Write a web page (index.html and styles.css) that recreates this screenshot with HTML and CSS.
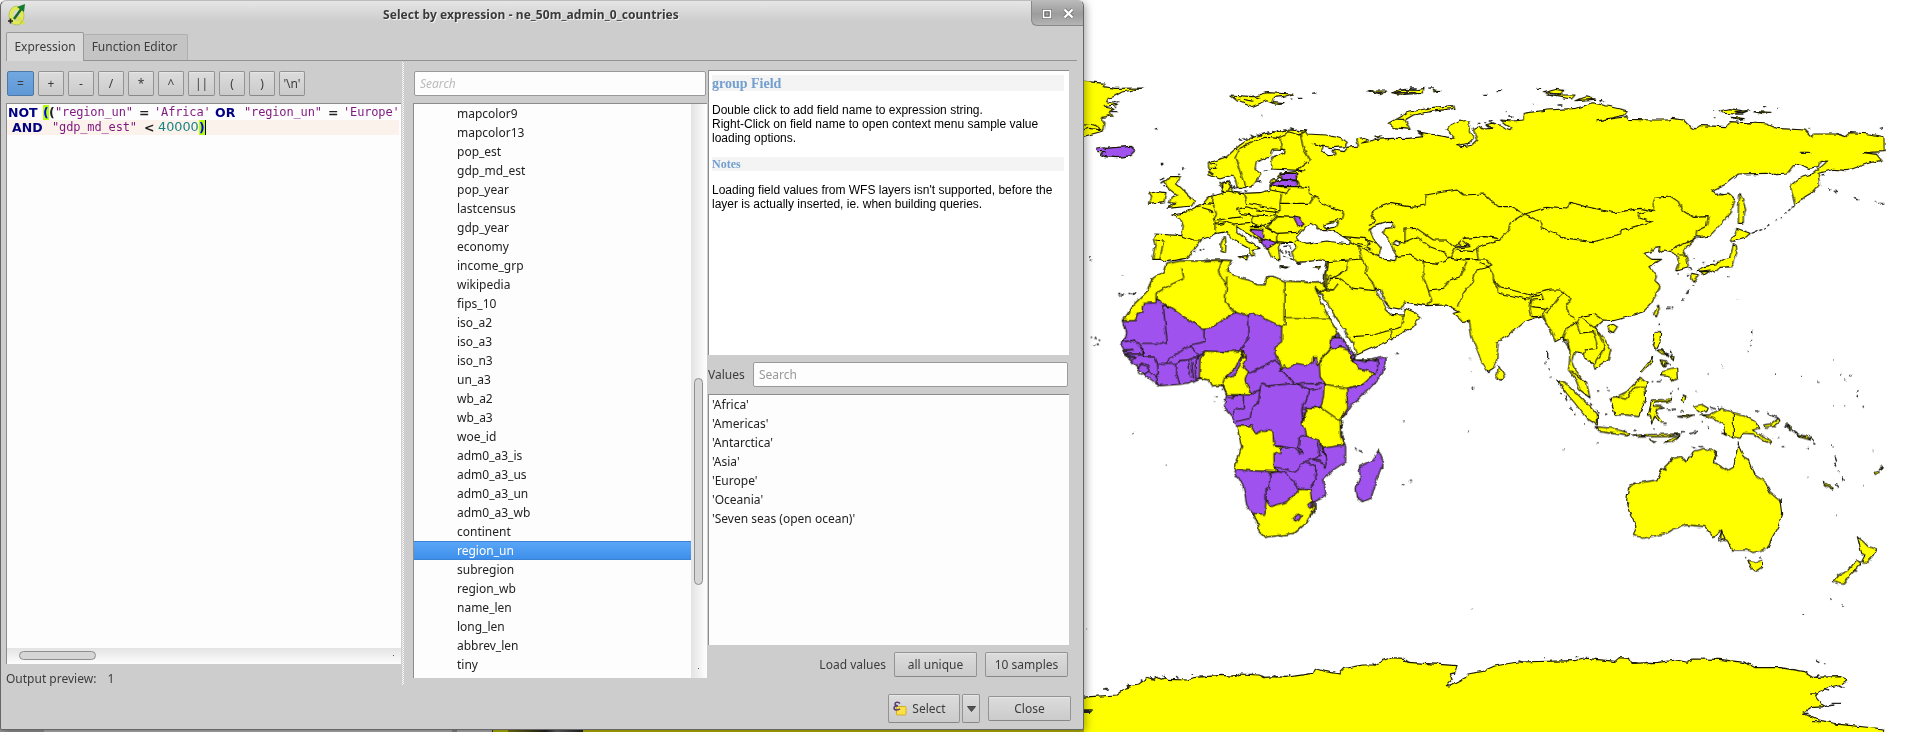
FILE: index.html
```html
<!DOCTYPE html>
<html lang="en">
<head>
<meta charset="utf-8">
<title>Select by expression</title>
<link rel="stylesheet" href="styles.css">
</head>
<body>
<div class="desktop">
<svg class="map" viewBox="0 0 2517 2196" width="839" height="732">
<defs><filter id="coast" filterUnits="userSpaceOnUse" x="0" y="0" width="2517" height="2196"><feTurbulence type="fractalNoise" baseFrequency=".05" numOctaves="2" seed="4"/><feDisplacementMap in="SourceGraphic" scale="13" xChannelSelector="R" yChannelSelector="G"/></filter></defs>
<g filter="url(#coast)"><g transform="translate(0 180)">
<!-- Eurasia -->
<path class="y" d="M680,213 L680,222 740,225 790,238 803,248 795,260 760,263 725,258 695,250 730,262 725,275 745,287 765,285 758,270 790,275 800,262 835,258 830,237 845,233 865,240 845,250 870,245 885,238 935,235 985,235 1030,230 1010,215 1050,222 1125,235 1110,220 1098,210 1110,195 1140,180 1165,185 1170,200 1168,215 1180,235 1165,250 1130,257 1150,260 1175,255 1190,240 1185,225 1180,205 1195,198 1210,207 1240,205 1215,195 1235,190 1262,195 1270,205 1290,212 1295,205 1280,195 1262,180 1300,183 1330,180 1330,160 1400,150 1490,145 1540,128 1580,138 1642,152 1635,165 1550,183 1640,170 1645,178 1720,180 1765,180 1775,175 1810,180 1825,195 1845,207 1860,197 1940,200 1950,185 2060,192 2090,205 2175,210 2195,230 2200,222 2275,222 2295,230 2310,218 2370,222 2412,230 2413,275 2350,278 2390,283 2405,302 2370,308 2300,332 2260,328 2235,335 2215,340 2218,375 2200,395 2175,410 2145,437 2130,375 2150,358 2200,340 2235,310 2240,303 2220,305 2215,320 2185,325 2160,312 2140,317 2120,342 2080,345 2060,340 1975,342 1940,370 1895,392 1920,405 1945,402 1965,420 1952,460 1920,495 1890,527 1865,532 1850,530 1835,545 1820,560 1810,575 1820,590 1825,620 1790,630 1798,610 1790,590 1775,575 1750,570 1735,578 1740,560 1725,562 1715,575 1690,580 1715,598 1745,598 1710,620 1730,645 1725,665 1740,680 1715,730 1690,755 1640,772 1600,782 1572,780 1555,795 1545,805 1575,840 1593,870 1585,900 1545,928 1540,910 1515,895 1510,880 1485,875 1480,885 1475,905 1485,930 1500,950 1520,970 1530,1014 1500,990 1485,955 1465,930 1468,910 1470,870 1460,840 1445,835 1425,845 1415,815 1395,785 1385,765 1335,785 1300,815 1255,845 1250,900 1240,925 1222,935 1200,895 1175,830 1168,780 1150,788 1120,760 1140,755 1100,735 1040,737 985,728 975,725 960,750 930,745 915,725 900,690 885,685 905,720 920,750 935,763 970,765 975,745 1000,755 1020,770 1000,800 935,838 830,885 820,850 790,805 760,760 735,720 720,700 730,680 742,605 720,600 680,605 650,607 640,590 635,575 650,558 640,550 600,550 595,560 600,600 575,590 560,560 545,545 500,520 470,500 470,515 500,540 540,565 520,568 520,590 510,585 505,565 460,540 440,515 410,520 390,530 365,538 350,560 330,580 320,595 260,605 240,598 218,598 225,560 220,535 225,522 305,527 310,495 300,475 275,465 310,460 350,440 370,430 385,412 410,405 428,400 420,370 445,362 450,380 460,398 485,400 540,398 570,390 570,372 580,355 595,365 605,355 590,350 600,340 670,332 575,327 575,295 595,287 615,275 610,268 580,267 570,290 530,305 525,325 545,340 520,375 475,387 470,365 455,345 420,357 387,345 385,310 440,290 480,255 510,235 560,220 620,210Z"/>
<!-- inland seas -->
<path class="w" d="M680,497 L650,530 655,545 680,553 740,543 805,552 808,540 790,530 765,515 735,508 770,500 775,485 730,495 740,508 715,510 710,500 695,490Z M870,510 L880,500 920,487 940,488 940,503 915,505 910,520 925,535 940,570 950,590 945,602 915,598 895,590 903,565 880,535Z M940,545l10,-4 8,8 -8,8 -10,-4Z"/>
<!-- Eurasian borders -->
<path class="b" d="M497,385 L465,290 480,265 520,245 555,232 600,235 605,268 M660,220 L672,270 690,300 670,315 650,332 M600,235 L625,215 660,225 680,213 M650,340 L650,358 660,380 600,378 M570,390 L620,400 630,385 M660,380 L685,383 690,405 703,410 690,430 600,430 605,400 M490,400 L500,430 600,450 600,430 M703,410 L720,425 750,440 790,455 785,475 750,487 M585,468 L600,450 M400,400 L398,430 410,460 400,478 M470,448 L500,440 530,450 590,457 585,468 520,465 480,460Z M350,438 L390,450 M370,430 L398,433 M400,478 L420,480 445,475 490,470 M405,515 L405,490 440,485 460,495 510,490 520,465 M510,490 L540,500 580,480 590,470 M580,480 L560,500 590,520 650,517 665,505 M590,470 L645,472 M590,520 L590,545 640,550 M510,500 L545,500 M550,500 L590,520 M590,545 L565,555 M305,527 L340,540 365,540 M225,540 L250,543 240,598 M790,530 L850,535 870,550 855,555 835,550 M808,545 L835,555 845,595 M835,555 L860,570 895,590 M850,535 L888,550 M742,605 L845,597 860,620 855,640 880,670 885,690 M805,600 L800,630 755,655 735,690 M775,655 L820,685 885,692 M755,655 L775,655 M870,465 L890,445 930,430 1000,442 1035,435 1035,405 1130,390 1150,405 1212,402 1255,440 1290,440 1335,462 1400,442 1460,447 1470,427 1520,440 1605,458 1680,445 1720,452 1720,430 1725,412 1770,408 1795,425 1808,452 1840,472 1885,470 1880,495 1850,510 1848,530 M870,465 L890,485 865,495 M975,550 L975,507 1010,505 1060,540 1100,540 1125,560 1150,535 1215,530 1255,535 M1255,545 L1285,510 1290,490 1335,462 1380,485 1385,505 1430,520 1445,533 1540,545 1620,525 1625,510 1715,485 1680,475 1675,462 1705,452 M975,550 L950,545 M945,590 L990,585 1030,605 1070,610 1110,595 1090,575 1050,560 1010,530 975,545 M1110,595 L1125,565 1170,560 1150,545 M1130,570 L1180,575 1195,560 1255,540 M1110,595 L1150,600 1195,595 1190,570 M1030,605 L1030,650 1045,690 1090,685 1110,660 1140,650 1160,605 M1045,690 L1055,720 1040,737 M1135,740 L1150,700 1180,660 1190,630 1215,625 1235,615 1220,600 1190,600 M1200,610 L1225,620 1240,645 1240,660 1260,680 1350,705 1410,690 1440,690 1470,715 1460,735 1460,750 1485,778 M1240,665 L1255,685 1255,700 1345,718 1350,705 M1350,730 L1355,710 1385,705 1390,718 1355,720 1350,745 1355,770 1385,770 M1355,740 L1400,745 1390,760 1397,785 M1400,760 L1430,720 1450,700 M1450,838 L1460,805 1490,788 1500,820 1540,815 1550,850 1550,865 1515,870 1510,880 M1490,788 L1500,770 1545,762 1572,780 M1500,770 L1545,805 1570,850 1572,865 1550,898 1545,910 M1450,838 L1470,870 M1475,935 L1505,960 M1795,585 L1815,585 M1770,570 L1850,535 M820,830 L880,825 965,800 970,765 M930,812 L938,838 M735,690 L760,690 775,670 M700,685 L720,700 M400,478 L410,495 435,490 M475,400 L430,390"/>
<path class="p" d="M600,340 L648,340 650,360 610,358Z M570,375 L590,360 650,363 650,380 600,380Z M640,470 L660,475 672,490 655,500Z M512,505 L548,508 552,530 545,540 520,520Z M545,535 L565,540 590,548 575,558 560,568 550,550Z M390,450l10,5 -5,3Z"/>
<path class="w" d="M585,358l12,-6 12,6 -8,8Z"/>
<!-- North Atlantic and Arctic islands -->
<path class="y" d="M-9,62 L75,70 70,80 105,85 190,84 125,97 100,110 85,115 80,125 115,133 70,140 105,148 90,155 98,168 65,172 75,190 72,212 -9,235Z M450,105 L520,110 560,98 638,102 610,110 580,112 575,125 612,128 585,133 560,122 515,140 470,122Z M925,190 L960,170 980,158 1060,142 1118,137 1122,145 1050,155 1000,165 975,180 990,208 940,203Z M270,350 L302,350 290,372 305,385 325,405 345,422 335,438 262,445 290,430 268,428 275,410 290,405 265,385 255,365Z M232,395 L258,398 252,425 208,430 215,412 207,400Z M425,370l22,-7 5,15 -8,15 -18,2Z M428,535l8,-2 2,15 -4,4 4,5 -2,20 -12,-2 -2,-20Z M475,590l30,-3 -5,13Z M600,620l25,1 -8,4Z M700,624l22,-5 -8,9Z M1390,98 L1430,88 1455,92 1440,102Z M1400,105 L1485,105 1475,117 1430,110Z M1485,122 L1520,110 1545,118Z M1918,152 L1945,146 1985,152 1970,162 1930,160Z M2020,155l50,2 -20,4Z M1955,172l35,4 -20,4Z M1965,155l40,-3 -15,6Z M885,228l20,0 -15,5Z"/>
<path class="y" d="M860,93l60,0 -20,8Z M935,98l40,-10 30,2 30,-5 -10,15 -60,3Z M1060,90l22,2 -20,4Z M0,190l45,5 20,15 -40,-5 -25,10"/>
<path class="p" d="M47,265 L70,260 75,265 110,262 155,259 167,270 150,287 110,293 75,290 60,283 75,275 50,275Z"/>
<!-- East Asian islands -->
<path class="y" d="M1980,400 L1990,425 1997,450 1990,470 1990,490 1975,490 1975,440Z M1970,505 L2010,520 2000,530 1975,538 1955,545 1950,535 1965,525Z M1960,553 L1970,560 1970,580 1962,605 1955,620 1920,622 1905,637 1890,630 1850,635 1870,620 1905,615 1925,600 1950,590Z M1835,640l20,4 -12,23 -8,-10Z M1862,635l25,0 -15,10Z M1735,735l3,12 -9,24 -8,-8Z M1585,797l15,-4 12,8 -12,17 -14,-8Z M1255,918l14,20 4,15 -12,8 -10,-10Z"/>
<g transform="translate(1200 720)">
<path class="y" d="M230,240 L265,255 300,290 330,320 352,345 352,375 320,355 285,310 260,280Z M345,380 L400,385 450,400 445,408 360,395Z M390,292 L410,290 440,275 480,235 505,250 495,265 497,300 475,350 440,345 405,345 395,310Z M515,300 L570,298 575,292 570,305 525,305 520,318 550,320 525,330 550,365 540,368 525,345 515,372 512,350 505,345Z M525,95 L542,95 540,125 530,145 518,135Z M545,215 L590,205 592,235 580,242 570,228 545,225Z M540,180l20,3 5,12 -15,3Z M570,165l12,5 -2,12Z M530,150l20,0 10,15 -18,-6Z M483,213l35,-45 -3,17 -27,30Z M555,430l25,-18 20,-6 -25,20Z M640,318 L665,313 685,325 680,335 660,335Z M660,345 L690,345 705,335 725,325 760,338 790,345 825,365 840,385 820,390 845,408 875,425 870,432 820,402 790,400 780,415 735,405 730,375 700,355Z M848,375 L875,372 895,355 900,362 880,380 855,382Z M610,285l8,3 -6,22 -8,-10Z M590,350l50,-5 -20,8Z M725,400l15,0 -5,6Z M455,408 L480,405 600,402 560,410 470,411Z M508,420l18,6 -8,2Z M920,372l15,12 -5,5Z M945,400l35,10 12,10 -30,-8Z M1030,545l30,20 -5,3 -22,-14Z M1182,515l12,-4 4,6 -12,3Z M1195,505l15,-6 -6,8Z"/>
<path class="y" d="M445,565 L460,552 530,540 545,510 580,475 605,470 620,485 640,455 670,445 710,455 700,485 745,513 760,505 768,460 775,435 790,470 808,480 825,525 855,545 870,575 900,600 905,640 895,680 875,715 862,745 820,758 800,750 755,750 740,720 722,715 725,690 700,712 675,680 620,675 580,688 560,700 490,715 460,705 468,680 445,620 440,600Z M803,783l20,5 22,-6 0,20 -18,12 -12,-10Z M1132,710 L1150,725 1165,740 1193,747 1180,770 1160,788 1145,785 1155,765 1145,760Z M1130,780 L1143,790 1125,810 1090,850 1060,842 1075,825 1105,810Z"/>
<path class="b" d="M760,338V415 M410,290 L440,295 465,262 500,262 M775,425v10 M715,720l10,-25 10,20 -20,8"/>
<path class="dots" d="M203,150v28 M198,185v4 M207,205v6 M213,227v3 M240,280l6,4 M255,290l6,12 M268,322l8,8 M285,340l4,5 M350,330l8,10 M375,343h7 M380,263h3 M385,272h4 M348,273h10 M330,310l6,6 M430,392h10 M460,391h10 M483,408h15 M535,325h22 M560,330h14 M578,328h10 M600,335h12 M640,345h5 M577,270l-6,10 M595,262v4 M538,68v6 M560,25h12 M575,22h5 M545,150l20,15 M555,190l18,5 M570,150l8,20 M545,185l15,15 M515,245h5 M530,242h12 M603,395h12 M630,402l22,-8 M685,380v8 M690,320l15,8 M712,320l8,8 M828,333h10 M862,340l25,12 M888,350l10,8 M915,375l15,12 M935,390l20,14 M955,405l20,6 M985,405l18,20 M875,412v3 M895,413h3 M905,440h8 M983,443h4 M1000,430l6,3 M1050,433h3 M1060,440v4 M1065,470l5,15 M1060,487l8,12 M1078,515v3 M1088,528l5,15 M1065,550l10,10 M1200,510l10,-10 M1178,454h2 M1072,646h2 M980,532h2 M1050,897h4 M1085,917h3 M885,223h3 M960,230h3 M1015,247h3 M1080,225h4 M1093,240h3 M1110,227h8 M1130,272v4 M1132,288v8 M1148,318l4,4 M1060,180h2 M1060,317h3 M1090,318h3 M727,199h3 M686,222h3 M647,274h2 M815,90v12 M815,120v4 M813,135v4 M803,153h4 M248,450h3 M350,431h3 M635,443h14 M655,440h12 M700,450l12,20 M545,510l15,-5 M565,488l10,-5 M440,610l8,4 M795,770h4 M843,770v6 M1120,813h12 M1070,850l5,5 M1150,560h2 M312,372h3 M522,385v4 M550,373h10 M605,285l12,5 M665,365h4 M900,598v10 M460,550h6"/>
</g>
<path class="dots" d="M2015,520l15,-6 M2035,512l8,-4 M2050,505l6,-3 M2062,498l8,-3 M2085,485l4,-4 M2100,475l4,-3 M2115,460l4,-3 M2125,450l6,-6 M2135,442l8,-3 M2225,345l8,-2 M2248,388l8,4 M2265,393l6,3 M2325,415l12,5 M2385,427h3 M2395,430h6 M2403,427h6 M2400,205l10,-2 M2095,145h3 M2048,140h10 M1900,152h4 M1902,170h4 M1370,88h15 M1250,92h12 M1210,106h12 M1360,133h3 M1433,135h14 M1558,122h12 M1560,125h14 M1285,168h12 M1275,155h3 M1210,185h8 M1230,182h8 M1190,190h8 M2186,208h3 M1920,400l10,5 M1942,620h5 M1945,647h3 M1970,718h3 M1827,690l-8,12 M1812,715l-4,8 M1840,675v3 M1820,647l6,-5 M1790,642h4 M1832,630l-6,-6 M1870,605v5 M1843,595v2 M1900,603h4 M1955,546h12 M695,100l16,-2 M655,115h12 M632,117h4 M545,166h4 M222,207l10,-2 M240,310h10 M245,310v4 M308,330l6,-5 M295,345l4,-4 M240,360l12,-6 M245,370l10,-8 M250,380h12 M100,125h8 M115,122v6 M105,140h6 M95,155l20,0 M80,165h12 M475,240h12 M490,232l10,8 M510,225l12,6 M530,222l14,2 M545,218l10,3 M560,212l8,5 M575,210l8,6 M590,210l15,4 M610,206l12,4 M630,206l14,5 M650,210l14,3 M665,212l14,0 M460,265l12,4 M430,290l12,4 M388,310l25,5 M388,325h22 M388,335l12,8 M443,368l10,10 M450,380l15,8 M460,378l8,12 M470,385h10 M530,365l12,-3 -3,6 M555,330h8 M495,395l6,-4 M615,570l6,10 M610,560l12,-2 M625,575l8,15 M610,588l10,6 M630,595l12,6 M625,560l8,6 M600,570l6,8 M340,577h5 M356,570h8 M372,568h4 M28,590h4 M32,600h4 M126,648h3 M115,700h6 M123,705h10 M145,700h5 M155,705l12,-8 M430,600v8 M655,610h8 M1215,195l20,8 M1230,185l20,8 M460,112l20,6 M490,118l30,6 M520,108l20,6 M865,97h50 M945,98h60 M960,90h60 M970,103l30,-6 M990,84h18 M1045,84h18 M1010,215l20,8 M950,178h30 M2160,277h30 M1970,162h20 M2000,188h20 M2070,343h25 M1400,100l40,2 M2270,220l20,8 M1130,560l40,-5 M1135,550l15,8 M860,560l12,8 M645,545l12,-4"/>
<!-- Africa -->
<g transform="translate(0 660)">
<path class="p" d="M258,-48 L300,-57 360,-57 425,-60 455,-58 440,-30 460,-12 505,0 530,14 555,15 560,-10 580,-10 615,4 660,5 700,9 728,8 735,25 722,38 705,22 720,60 740,100 750,120 775,160 795,190 820,220 826,238 850,245 918,230 918,250 900,290 860,335 820,370 800,400 780,420 780,450 790,480 797,500 797,545 760,570 728,600 738,635 735,650 705,665 705,690 680,725 640,760 600,766 555,772 537,755 535,735 517,700 500,675 490,620 463,570 485,500 470,435 455,410 430,380 440,345 425,315 395,318 385,300 360,295 330,308 300,313 240,317 200,290 165,255 135,220 125,195 140,160 130,122 160,75 200,35 215,0 250,-25Z M895,510 L910,545 890,600 873,655 850,665 832,655 828,625 840,600 838,560 880,540Z"/>
<path class="y" d="M258,-48 L300,-57 360,-57 425,-60 455,-58 440,-30 460,-12 505,0 530,14 555,15 560,-10 580,-10 615,4 660,5 700,9 728,8 735,25 722,38 705,22 720,60 740,100 750,120 775,160 755,175 750,210 720,245 710,255 710,230 700,230 700,245 685,257 650,250 605,270 600,245 585,220 585,200 605,185 605,140 515,98 495,105 465,97 390,145 370,148 228,55 228,68 190,70 185,95 175,100 165,122 130,122 160,75 200,35 215,0 250,-25Z M372,213 L430,215 490,212 480,235 465,265 435,295 430,315 395,318 385,300 358,293 360,240Z M490,212 L498,240 490,260 505,275 495,300 512,345 440,343 430,315 435,295 460,290 480,255Z M750,208 L780,200 805,208 815,240 835,265 885,280 850,312 800,325 735,312 720,290 718,245Z M733,312 L800,325 803,385 780,422 722,382 730,350Z M680,383 L722,382 780,422 782,470 792,495 725,505 720,483 680,465 668,430Z M470,438 L515,438 528,462 550,450 578,455 582,497 603,500 603,520 582,520 582,560 592,575 463,570 485,500Z M520,700 L555,703 558,660 575,680 620,665 660,628 690,630 697,670 705,685 680,725 640,760 600,766 555,772 537,755 535,735Z"/>
<path class="p" d="M640,712l12,-10 13,5 -10,15 -10,4Z M683,677l10,-8 5,12 -8,4Z"/>
<path class="b" d="M425,-60 L415,-25 440,15 435,65 465,97 M440,15 L440,-10 M305,-38 L312,-5 270,15 228,40 228,55 M615,4V135L605,140 M615,112 L750,115 M228,55 L265,80 250,80 262,190 185,190 M375,148 L375,185 330,195 265,240 262,250 M505,100 L507,170 482,210 M130,185 L165,180 187,205 185,222 135,222 M187,200 L190,228 225,228 232,250 290,250 M135,212h28 M140,232h25l-8,8 M232,250 L235,280 225,290 238,317 M175,262l10,-10 18,6 0,18 -18,10 -10,-8Z M203,270 L225,290 M290,250 L290,285 300,313 M295,242 L325,240 332,295 M335,245 L340,295 M345,245 L347,295 M358,228 L345,245 M325,240 L358,228 330,195 M290,250 L295,242 M345,295h12 M358,228l14,-15 M505,282 L585,240 600,255 M600,270 L645,310 735,312 M545,312 L560,318 645,310 M512,345 L540,325 545,312 M540,325 L535,370 515,385 510,415 470,425 M442,345 L490,348 490,385 460,390 462,410 M442,355h17v-10 M645,310 L670,320 688,328 M688,328 L685,350 665,385 668,430 M685,328 L722,325 M665,400h12l-8,15 M668,385l12,0 0,12 M690,383 L722,382 M680,465 L658,470 655,505 670,520 660,520 645,505 582,497 M582,560 L640,575 675,545 720,530 713,483 M675,545 L705,555 708,600 690,628 M620,580 L640,605 660,628 M592,575 L570,580 568,625 558,628 558,660 M592,575 L620,578 M720,483 L725,510 740,540 735,565 720,540 700,540 M728,505 L740,540 M755,170 L780,170 820,220 M815,240 L895,240 890,278 M810,235l15,-12 3,12 -14,6Z M800,325 L850,312 M605,270 L615,255 M480,225l18,8 M697,670 L705,665"/>
<path class="dots" d="M32,172h4 M45,173l4,8 M58,178v5 M40,195h6 M50,193h8 M115,45h6 M125,42h10 M145,43h8 M158,46l10,-8 M425,328v6 M408,350h5 M402,366h3 M157,461h4 M258,553h3 M967,423h4 M1163,454h4 M945,223h12 M965,613h8 M990,604h6 M825,505l8,6 M840,510l8,8 M1168,238h2 M1172,273h2 M1177,320v8 M785,425v5 M783,435v8 M785,460h4 M788,182v8 M905,560v8 M790,155l10,15 M915,65l12,12 M135,215l25,-4 M135,225l30,6 M740,-15v35 M742,0l8,-8"/>
</g>
<path class="b" d="M735,680 L733,650 742,605 M760,690 L735,685 M745,650l10,-5"/>
<!-- Antarctica -->
<g transform="translate(0 1620) scale(1.605 1)">
<path class="y" d="M-9,293 L20,290 68,285 80,270 92,265 88,258 110,252 125,235 135,240 145,232 152,238 160,232 165,238 200,240 215,232 265,226 290,229 300,222 335,225 345,232 365,230 385,232 435,220 440,205 460,215 485,222 495,205 530,195 550,195 565,183 580,173 605,175 615,187 705,197 700,220 692,222 697,235 685,257 692,258 720,235 725,222 750,215 775,198 820,186 925,182 940,174 1000,184 1008,173 1025,175 1030,190 1080,187 1115,180 1135,187 1145,177 1195,178 1245,188 1262,203 1310,203 1355,215 1372,232 1420,230 1435,240 1425,253 1400,262 1380,275 1375,290 1385,312 1395,320 1370,322 1352,340 1375,358 1420,373 1502,387 1502,410 -9,410Z"/>
<path class="dots" d="M0,333h24 M0,337h20 M45,267h9 M50,263v8 M88,255l6,8 M115,238v8 M132,232l8,10 M155,225l5,12 M180,228l4,8 M210,222v3 M225,228h10 M315,220h8 M340,228l6,6 M360,226l8,6 M392,222v6 M545,190l8,6 M605,180l10,8 M692,222l8,-3 M820,182l8,6 M870,172v3 M900,177v3 M930,168v4 M947,167v4 M1030,188h12 M1060,187h10 M1242,185l8,10 M1315,203v5 M1376,180l6,5 M1392,190v3 M1428,262v3 M1405,310h18 M1395,318l15,-3 M1365,282h14 M1350,340h10 M1370,365h14 M1412,373h10 M1424,18v2 M1350,42v3 M734,25v3 M12,86v3 M1370,230l12,-5 M1390,265l10,5 M1415,255l10,8"/>
</g>
</g></g>
</svg>
<div class="strip"><i class="s1"></i><i class="s2"></i><i class="s3"></i><i class="s4"></i><i class="s5"></i></div>

<div class="dialog">
  <header class="titlebar">
    <svg class="logo" width="18" height="22" viewBox="0 0 18 22"><ellipse cx="8.5" cy="11.500" rx="5.500" ry="7.500" fill="none" stroke="#e0ea52" stroke-width="4"/><path d="M9 13l7 7" stroke="#d8e04a" stroke-width="3.500"/><ellipse cx="8.500" cy="11.500" rx="7.500" ry="9.500" fill="none" stroke="#96a238" stroke-width=".5"/><path d="M6 15L14 4" stroke="#166b2c" stroke-width="2.400"/><path d="M9 3l8-3-1 8z" fill="#167a30"/><path d="M0 17h5M2.500 14.500v5" stroke="#222" stroke-width="1.600"/></svg>
    <h1>Select by expression - ne_50m_admin_0_countries</h1>
    <div class="winctl">
      <svg width="54" height="26" viewBox="0 0 54 26"><rect x="10.500" y="9.500" width="9" height="9" fill="none" stroke="#707070"/><rect x="11.500" y="10.500" width="7" height="7" fill="none" stroke="#fff" stroke-width="1.500"/><rect x="13" y="12" width="4" height="4" fill="#a5a5a5" stroke="#666"/><path d="M32.500 9.500l8 8m0-8l-8 8" stroke="#777" stroke-width="4"/><path d="M32.500 9.500l8 8m0-8l-8 8" stroke="#fff" stroke-width="2.300"/></svg>
    </div>
  </header>
  <nav class="tabs"><div class="tab active">Expression</div><div class="tab">Function Editor</div></nav>
  <main class="panes">
    <section class="left">
      <div class="ops"><b class="op on">=</b><b class="op">+</b><b class="op">-</b><b class="op">/</b><b class="op">*</b><b class="op">^</b><b class="op wide">||</b><b class="op">(</b><b class="op">)</b><b class="op">'\n'</b></div>
      <div class="editor">
        <div class="code"><span class="k w35">NOT</span><span class="hl w6">(</span><span class="o w6">(</span><span class="s w84">"region_un"</span><span class="o w15">=</span><span class="s w61">'Africa'</span><span class="k w29">OR</span><span class="s w84">"region_un"</span><span class="o w15">=</span><span class="s">'Europe'</span></div>
        <div class="code cur"><span class="k w40">AND</span><span class="s w92">"gdp_md_est"</span><span class="o w14">&lt;</span><span class="n w42">40000</span><span class="hl caret">)</span></div>
        <div class="hscroll"><i></i><u></u></div>
      </div>
      <div class="preview"><span>Output preview:</span><span>1</span></div>
    </section>
    <div class="split"></div>
    <section class="mid">
      <div class="field it">Search</div>
      <div class="list">
        <ul><li>mapcolor9</li><li>mapcolor13</li><li>pop_est</li><li>gdp_md_est</li><li>pop_year</li><li>lastcensus</li><li>gdp_year</li><li>economy</li><li>income_grp</li><li>wikipedia</li><li>fips_10</li><li>iso_a2</li><li>iso_a3</li><li>iso_n3</li><li>un_a3</li><li>wb_a2</li><li>wb_a3</li><li>woe_id</li><li>adm0_a3_is</li><li>adm0_a3_us</li><li>adm0_a3_un</li><li>adm0_a3_wb</li><li>continent</li><li class="sel">region_un</li><li>subregion</li><li>region_wb</li><li>name_len</li><li>long_len</li><li>abbrev_len</li><li>tiny</li></ul>
        <div class="vscroll"><i></i><u></u></div>
      </div>
    </section>
    <section class="right">
      <div class="help">
        <h2>group Field</h2>
        <p>Double click to add field name to expression string.<br>Right-Click on field name to open context menu sample value<br>loading options.</p>
        <h3>Notes</h3>
        <p>Loading field values from WFS layers isn't supported, before the<br>layer is actually inserted, ie. when building queries.</p>
      </div>
      <div class="vals"><span>Values</span><div class="field">Search</div></div>
      <ul class="vlist"><li>'Africa'</li><li>'Americas'</li><li>'Antarctica'</li><li>'Asia'</li><li>'Europe'</li><li>'Oceania'</li><li>'Seven seas (open ocean)'</li></ul>
      <div class="load"><span>Load values</span><div class="btn">all unique</div><div class="btn">10 samples</div></div>
    </section>
  </main>
  <footer class="actions">
    <div class="btn tall"><svg width="14" height="15" viewBox="0 0 14 15"><rect x="3.500" y="5.500" width="9.500" height="8.500" rx="1" fill="#fbe046" stroke="#cfae2c"/><path d="M7 2.500C5.500.5 2 1 2 3c0 1.500 2 1.700 3 1.700C3 4.700 1 5.300 1 7c0 2.500 4 2.500 6 .8" fill="none" stroke="#5b3a6e" stroke-width="1.500"/></svg>Select</div>
    <div class="btn tall drop"><svg width="9" height="6"><path d="M.5.500h8L4.500 5.500z" fill="#555" stroke="#444"/></svg></div>
    <div class="btn close">Close</div>
  </footer>
</div>
</div>
</body>
</html>
```
FILE: styles.css
```css
* { box-sizing: border-box; }
body { margin: 0; background: #fff; font: 12px/19px "Noto Sans", sans-serif; color: #3c3c3c; }
ul, h1, h2, h3, p { margin: 0; padding: 0; list-style: none; }
.desktop { position: relative; width: 1919px; height: 732px; overflow: hidden; }
.map { display: block; margin-left: 1080px; }
.map filter { color-interpolation-filters: sRGB; }
.map path { stroke: #141400; stroke-width: 1.1px; vector-effect: non-scaling-stroke; stroke-linejoin: round; }
.map .y { fill: #ff0; }
.map .p { fill: #9f52ee; }
.map .w { fill: #fff; }
.map .b { fill: none; }
.map .dots { fill: none; stroke: #222; stroke-width: 1.4px; }

.strip { position: absolute; left: 0; top: 729px; width: 1084px; height: 3px; display: flex; background: #b5b500; }
.strip i { height: 3px; }
.s1 { width: 44px; background: #949494; }
.s2 { width: 408px; background: #b4b4b4; }
.s3 { width: 5px; background: #888; }
.s4 { width: 36px; background: #b4b4b4; border-right: 1px solid #333; }
.s5 { width: 75px; margin-left: 15px; background: linear-gradient(90deg, #77770a, #222 50%, #666 65%, #222); }

.dialog { position: absolute; left: 0; top: 0; width: 1084px; height: 730px; display: flex; flex-direction: column; background: #cdcdcd; border: 1px solid #666; border-top-color: #bbb; border-radius: 6px 6px 2px 2px; box-shadow: 2px 2px 9px rgba(0,0,0,.35); overflow: visible; }
.titlebar { height: 31px; display: flex; align-items: flex-start; background: linear-gradient(#e6e6e6, #cdcdcd 20px); border-radius: 6px 6px 0 0; }
.logo { margin: 3px 0 0 7px; flex: none; }
.titlebar h1 { flex: 1; margin-left: 5px; text-align: center; font-size: 12px; line-height: 27px; font-weight: bold; letter-spacing: .07px; color: #3a3a3a; text-shadow: 1px 1px 0 #f4f4f4; }
.winctl { width: 52px; height: 25px; background: linear-gradient(#b9b9b9, #9c9c9c 13px, #b4b4b4); border-left: 1px solid #888; border-bottom: 1px solid #888; border-radius: 0 5px 0 6px; }
.winctl svg { display: block; margin-top: -1px; }

.tabs { height: 29px; margin: 0 6px 0 5px; display: flex; align-items: flex-end; border-bottom: 1px solid #939393; }
.tab { width: 104px; height: 26px; padding-right: 2px; text-align: center; line-height: 24px; background: #c4c4c4; border: 1px solid #afafaf; border-width: 1px 1px 0 0; border-radius: 2px 2px 0 0; }
.tab.active { width: 78px; height: 29px; padding: 0; line-height: 27px; margin-bottom: -1px; background: #d9d9d9; border: 1px solid #999; border-bottom: 0; }

.panes { display: flex; height: 625px; }
.left { width: 396px; margin-left: 5px; padding-top: 10px; }
.ops { display: flex; gap: 4px; height: 26px; margin-left: 1px; }
.op { width: 26px; height: 25px; font-weight: normal; text-align: center; line-height: 24px; }
.op, .btn { background: linear-gradient(#dcdcdc, #cbcbcb); border: 1px solid #939393; border-bottom-color: #888; border-radius: 2px; box-shadow: inset 0 1px #e6e6e6; }
.op.on { width: 27px; background: linear-gradient(#72a8e0, #5f98d6); border-color: #4d77a5; box-shadow: none; }
.op.wide { width: 27px; }
.editor { width: 395px; height: 561px; margin-top: 6px; display: flex; flex-direction: column; background: #fdfdfd; border: 1px solid #8c8c8c; border-width: 1px 0 0 1px; overflow: hidden; }
.code { display: flex; height: 15px; padding-left: 1px; line-height: 15px; white-space: pre; color: #222; }
.code:first-child { margin-top: 1px; }
.cur { padding-left: 5px; width: 392px; background: #fbf2ec; }
.code span { flex: none; }
.k { font: bold 12.5px/15px "DejaVu Sans", sans-serif; color: #000080; }
.s { font: 12px/15px "DejaVu Sans Mono", monospace; letter-spacing: -.15px; color: #7f187f; }
.o { font: bold 12.5px/15px "DejaVu Sans", sans-serif; }
.n { font: 12.8px/14px "DejaVu Sans", sans-serif; color: #188080; }
.hl { font: bold 12.5px/15px "DejaVu Sans", sans-serif; background: #b4ff00; color: #00f; }
.caret { width: 7px; margin-left: -1px; border-right: 1px solid #000; }
.w35 { width: 35px; } .w6 { width: 6px; } .w84 { width: 84px; } .w15 { width: 15px; } .w61 { width: 61px; }
.w29 { width: 29px; } .w40 { width: 40px; } .w92 { width: 92px; } .w14 { width: 14px; } .w42 { width: 42px; }
.hscroll { height: 16px; margin-top: auto; padding: 3px 0 0 12px; display: flex; justify-content: space-between; background: linear-gradient(#e3e3e3, #fdfdfd); }
.hscroll i { width: 77px; height: 9px; border: 1px solid #8e8e8e; border-radius: 5px; background: #d6d6d6; }
.hscroll u, .vscroll u { width: 1px; height: 1px; background: #555; margin: 4px 7px; }
.preview { display: flex; gap: 11px; margin-top: 5px; }
.split { width: 2px; margin: 1px 0 0 0; height: 623px; background: conic-gradient(#cdcdcd 25%, #fafafa 0 50%, #cdcdcd 0 75%, #fafafa 0) 0 0 / 2px 2px; }
.mid { width: 296px; margin-left: 9px; padding-top: 10px; }
.field { width: 292px; height: 25px; margin-left: 1px; padding-left: 5px; line-height: 23px; background: #fdfdfd; border: 1px solid #9a9a9a; border-radius: 2px; color: #999; }
.it { font-style: italic; color: #bbb; }
.list { display: flex; width: 294px; height: 575px; margin-top: 7px; background: #fdfdfd; border: 1px solid #8c8c8c; border-width: 1px 0 0 1px; color: #222; }
.list ul { width: 277px; }
.list li { height: 19px; padding-left: 43px; }
.list .sel { background: linear-gradient(#5ba7f8, #3c8eea); box-shadow: inset 0 1px #3b82d2, inset 0 -1px #3b82d2; color: #fff; }
.vscroll { width: 15px; padding: 274px 0 0 3px; background: linear-gradient(90deg, #e3e3e3, #fdfdfd); }
.vscroll i { display: block; width: 9px; height: 207px; border: 1px solid #8e8e8e; border-radius: 5px; background: #d6d6d6; }
.vscroll u { display: block; margin: 83px 0 0 4px; }
.right { width: 361px; margin-left: -1px; padding-top: 9px; }
.help { height: 285px; padding: 4px 5px 0 3px; background: #fff; border: 1px solid #8c8c8c; border-width: 1px 0 0 1px; font: 12px/14px "Liberation Sans", sans-serif; color: #000; }
.help h2, .help h3 { font: bold 14px/18px "Liberation Serif", serif; color: #729fcf; background: #f4f4f4; height: 16px; }
.help h3 { font-size: 12px; line-height: 14px; height: 14px; }
.help p { padding: 12px 0; white-space: nowrap; }
.vals { display: flex; height: 25px; margin-top: 7px; line-height: 25px; }
.vals .field { width: 315px; margin-left: auto; margin-right: 1px; }
.vlist { height: 251px; margin-top: 7px; padding-left: 3px; background: #fdfdfd; border: 1px solid #8c8c8c; border-width: 1px 0 0 1px; color: #222; }
.load { display: flex; justify-content: flex-end; gap: 8px; margin-top: 7px; padding-right: 1px; line-height: 25px; }
.btn { width: 83px; height: 25px; display: flex; align-items: center; justify-content: center; }
.actions { display: flex; justify-content: flex-end; align-items: center; height: 29px; margin-top: 8px; padding-right: 12px; }
.tall { width: 72px; height: 29px; gap: 5px; padding-right: 9px; }
.drop { width: 18px; margin-left: 2px; padding: 0; }
.close { margin-left: 8px; }
```
